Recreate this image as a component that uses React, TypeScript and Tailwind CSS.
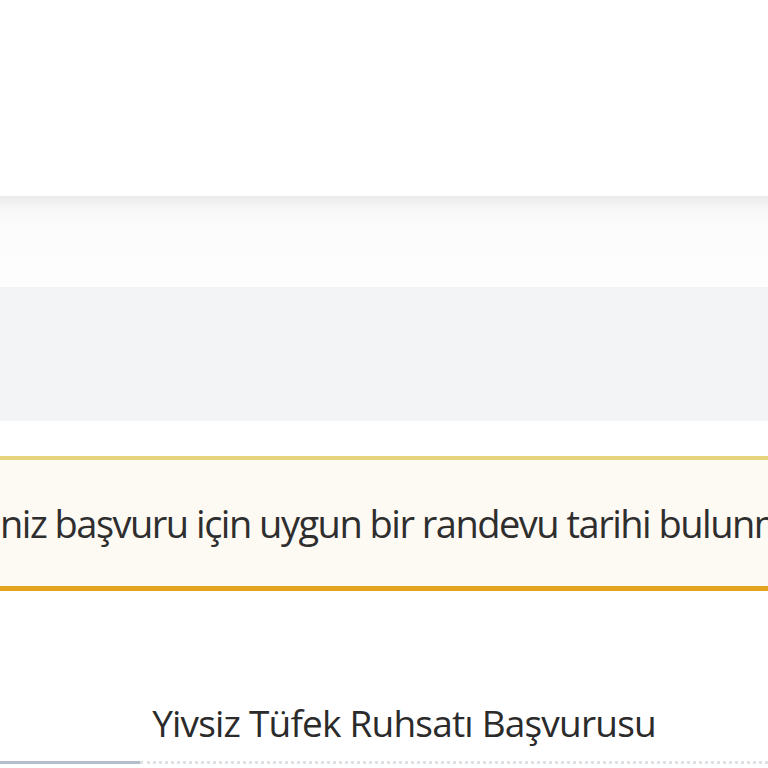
export default function App() {
  return (
    <div className="h-[768px] w-[768px] overflow-hidden bg-white font-['Open_Sans',sans-serif] text-[#333]">
      <div className="h-[196px] bg-white" />
      <div className="h-[91px] bg-[linear-gradient(to_bottom,#ebebeb_0px,#f7f7f7_14px,#fcfcfc_30px,#fdfdfd_100%)]" />
      <div className="h-[134px] bg-[#f3f4f6]" />
      <div className="h-[35px] bg-white" />
      <div className="border-t-[4px] border-b-[5px] border-t-[#e6d47c] border-b-[#e3a51f] bg-[#fdf9f3]">
        <div className="flex h-[126px] items-center overflow-hidden whitespace-nowrap">
          <p className="text-[38px] leading-none tracking-[-1.5px] text-[#2e2e2e]">
            niz başvuru için uygun bir randevu tarihi bulunmamaktadır.
          </p>
        </div>
      </div>
      <div className="h-[103px] bg-white" />
      <div className="flex h-[67px] items-start justify-center pl-[40px] pt-[10px]">
        <h2 className="text-[37px] leading-none tracking-[-0.8px] text-[#2b2b2b]">
          Yivsiz Tüfek Ruhsatı Başvurusu
        </h2>
      </div>
      <div className="flex h-[3px]">
        <div className="w-[140px] bg-[#b3bec8]" />
        <div className="flex-1 border-t-[3px] border-dotted border-[#dde2e6]" />
      </div>
    </div>
  )
}
